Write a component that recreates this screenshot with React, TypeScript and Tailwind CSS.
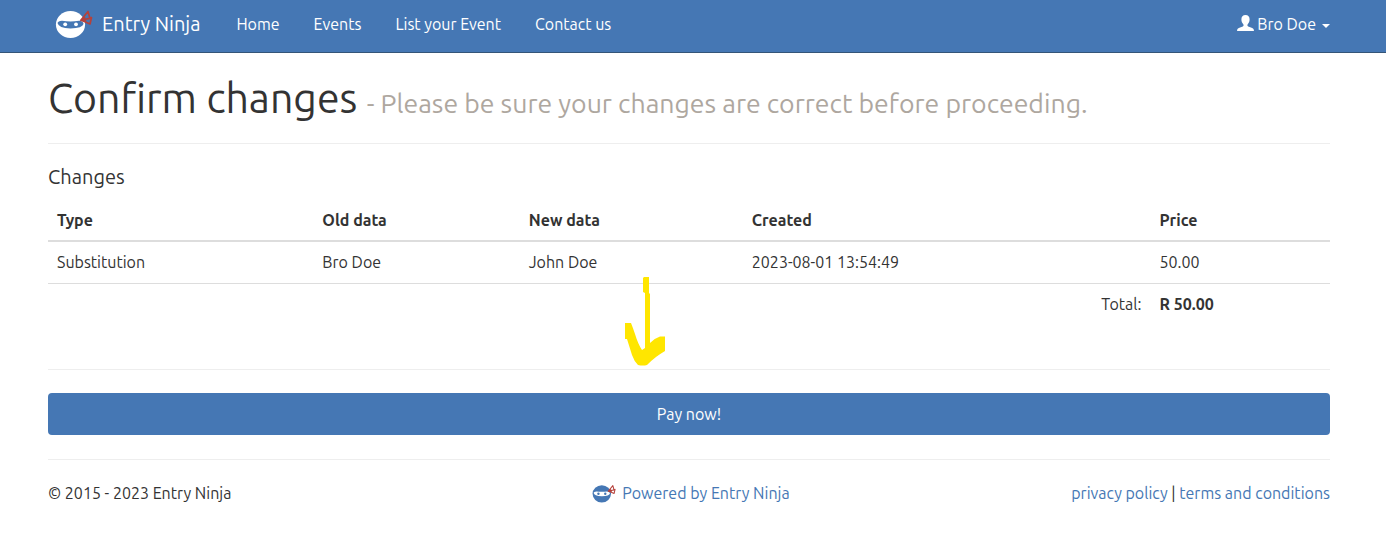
import React from "react";

type NinjaProps = { className: string; face: string; mask: string };

function NinjaLogo({ className, face, mask }: NinjaProps) {
  return (
    <svg className={className} viewBox="0 0 38 30" aria-hidden="true">
      <ellipse cx="15.5" cy="15.5" rx="14.6" ry="13.6" fill={face} />
      <path d="M2.5 14Q3 12.2 7 11.8Q15.500 13 24 11.8Q28.5 12.2 28.5 15Q27.5 19 15.500 19.500Q3.500 19 2.500 14Z" fill={mask} />
      <circle cx="10.2" cy="15.3" r="1.9" fill={face} />
      <circle cx="21" cy="15.300" r="1.9" fill={face} />
      <path
        d="M26 11L33 2.500L35 9.500ZM27 11.500L36.500 8.500L35 15Z"
        fill="none"
        stroke="#b5413b"
        strokeWidth="1.7"
        strokeLinejoin="round"
      />
      <path d="M24.5 12L30 7.5L31.500 12.500Z" fill="#b5413b" />
    </svg>
  );
}

const navLinks = ["Home", "Events", "List your Event", "Contact us"];

const changes = [
  { type: "Substitution", oldData: "Bro Doe", newData: "John Doe", created: "2023-08-01 13:54:49", price: "50.00" },
];

export default function App() {
  return (
    <div className="font-['Ubuntu','Noto_Sans',sans-serif] text-base leading-6 text-[#333333]">
      <header className="border-b border-[#345578] bg-[#4577b4] pr-14 pl-[55px] text-white">
        <nav className="flex h-[52px] items-center pb-1" aria-label="Main">
          <a href="#home" className="flex items-center gap-[9px] text-xl">
            <NinjaLogo className="h-[30px] w-[38px]" face="#ffffff" mask="#4577b4" />
            Entry Ninja
          </a>
          <ul className="ml-9 flex gap-[34px]">
            {navLinks.map((label) => (
              <li key={label}>
                <a href="#nav">{label}</a>
              </li>
            ))}
          </ul>
          <button type="button" className="ml-auto flex items-center" aria-haspopup="menu">
            <svg className="mr-[3px] mb-[3px] h-4 w-[17px]" viewBox="0 0 17 16" fill="currentColor" aria-hidden="true">
              <path d="M8.5 0C11.2 0 12.6 1.8 12.6 4.2C12.6 6.7 11.7 8 10.7 9.2C10.2 10 10.3 11 11.2 11.4L15.2 13Q17 13.7 17 16H0Q0 13.7 1.8 13L5.8 11.4C6.7 11 6.8 10 6.3 9.2C5.3 8 4.4 6.7 4.4 4.2C4.4 1.8 5.8 0 8.5 0Z" />
            </svg>
            Bro Doe
            <svg className="mt-[3px] ml-[6px] h-1 w-2" viewBox="0 0 8 4" fill="currentColor" aria-hidden="true">
              <path d="M0 0H8L4 4Z" />
            </svg>
          </button>
        </nav>
      </header>

      <main className="pr-14 pl-12">
        <div className="border-b border-[#eeeeee] pt-[21px] pb-4">
          <h1 className="text-[41px] leading-[48px]">
            Confirm changes <small className="text-[65%] text-[#aea79f]">- Please be sure your changes are correct before proceeding.</small>
          </h1>
        </div>

        <h2 className="mt-[21px] text-xl leading-6">Changes</h2>

        <div className="relative mt-[10px]">
          <table className="w-full table-fixed border-collapse text-left">
            <colgroup>
              <col className="w-[20.7%]" />
              <col className="w-[16.1%]" />
              <col className="w-[17.4%]" />
              <col className="w-[31.8%]" />
              <col className="w-[14%]" />
            </colgroup>
            <thead>
              <tr className="h-[42px] border-b-2 border-[#dddddd]">
                <th className="px-[9px]">Type</th>
                <th className="px-[9px]">Old data</th>
                <th className="px-[9px]">New data</th>
                <th className="px-[9px]">Created</th>
                <th className="px-[9px]">Price</th>
              </tr>
            </thead>
            <tbody>
              {changes.map((row) => (
                <tr key={row.created} className="h-[42px] border-b border-[#dddddd]">
                  <td className="px-[9px]">{row.type}</td>
                  <td className="px-[9px]">{row.oldData}</td>
                  <td className="px-[9px]">{row.newData}</td>
                  <td className="px-[9px]">{row.created}</td>
                  <td className="px-[9px]">{row.price}</td>
                </tr>
              ))}
            </tbody>
            <tfoot>
              <tr className="h-[42px]">
                <td colSpan={4} className="px-[9px] text-right">Total:</td>
                <td className="px-[9px] font-bold">R 50.00</td>
              </tr>
            </tfoot>
          </table>
          <svg className="absolute top-[78px] left-[45%] h-[89px] w-10" viewBox="0 0 40 89" fill="#ffe600" aria-hidden="true">
            <path d="M19 0H24V16L25 17V66Q30 61 35 59.5H40V74Q35 77 31 80Q27 83 22 88Q18 89 13 88Q9 84 7 78L2 62H0V46H6Q8 51 10 57Q13 67 17 73L20 71V16L18 15V1Z" />
          </svg>
        </div>

        <hr className="mt-11 border-[#eeeeee]" />
        <button type="button" className="mt-[23px] h-[42px] w-full rounded-[4px] bg-[#4577b4] text-white">
          Pay now!
        </button>
      </main>

      <footer className="mt-6 pr-14 pl-12">
        <div className="grid grid-cols-3 items-center border-t border-[#eeeeee] pt-[21px]">
          <p>© 2015 - 2023 Entry Ninja</p>
          <a href="#powered" className="flex items-center justify-center gap-[6px] pl-1 text-[#4577b4]">
            <NinjaLogo className="h-[19px] w-6" face="#4577b4" mask="#ffffff" />
            Powered by Entry Ninja
          </a>
          <p className="text-right">
            <a href="#privacy" className="text-[#4577b4]">privacy policy</a> | <a href="#terms" className="text-[#4577b4]">terms and conditions</a>
          </p>
        </div>
      </footer>
    </div>
  );
}
